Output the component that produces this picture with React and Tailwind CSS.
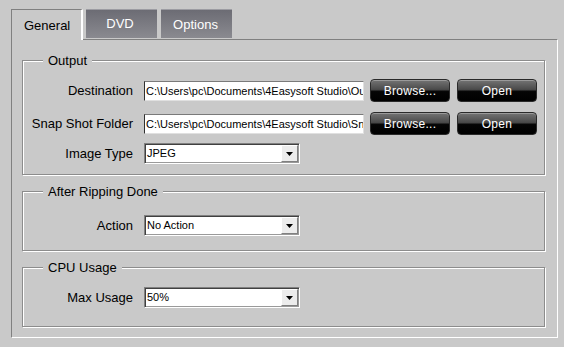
import React from 'react';

const FONT = "font-['Liberation_Sans',Arial,sans-serif]";

function Group({ title, className, children }) {
  return (
    <div className={`relative w-[523px] border border-[#8c8c8c] shadow-[inset_1px_1px_0_#fff,1px_1px_0_#fff] ${className}`}>
      <span className="absolute top-[-8px] left-[20px] px-[5px] bg-[#c9c9c9] text-[13px] leading-[15px] text-black">
        {title}
      </span>
      {children}
    </div>
  );
}

function Label({ children }) {
  return (
    <div className="w-[110px] text-right text-[13px] leading-[15px] text-black whitespace-nowrap">{children}</div>
  );
}

function PathBox({ value }) {
  return (
    <div className="ml-[11px] w-[220px] h-[20px] bg-white border border-t-[#7a7a7a] border-l-[#303030] border-r-[#e0e0e0] border-b-[#e0e0e0] overflow-hidden whitespace-nowrap text-[11px] leading-[18px] pl-[1px] text-black">
      {value}
    </div>
  );
}

function DarkButton({ children, className = '' }) {
  return (
    <button className={`w-[80px] h-[23px] rounded-[4px] border border-[#2a2a2a] bg-[linear-gradient(to_bottom,#747474_0%,#4a4a4a_45%,#050505_55%,#000_100%)] shadow-[inset_0_1px_0_#9a9a9a] text-white text-[12px] leading-[20px] tracking-[0.3px] ${className}`}>
      {children}
    </button>
  );
}

function Combo({ value }) {
  return (
    <div className="ml-[11px] w-[156px] h-[21px] flex items-center bg-white border border-t-[#808080] border-l-[#808080] border-r-white border-b-white shadow-[inset_1px_1px_0_#404040,inset_-1px_-1px_0_#9a9a9a]">
      <div className="flex-1 text-[11px] leading-[17px] pl-[2px] text-black whitespace-nowrap overflow-hidden">{value}</div>
      <div className="w-[17px] h-[17px] mr-[1px] bg-[#ececec] border border-t-white border-l-white border-r-[#808080] border-b-[#808080] flex items-center justify-center">
        <svg width="7" height="4" viewBox="0 0 7 4">
          <path d="M0 0h7L3.5 4z" fill="#000" />
        </svg>
      </div>
    </div>
  );
}

export default function App() {
  return (
    <div className={`w-[564px] h-[347px] bg-[#c9c9c9] pt-[9px] pl-[11px] ${FONT}`}>
      {/* Tabs */}
      <div className="flex items-start h-[30px]">
        <div className="relative z-10 w-[72px] h-[31px] bg-[#c9c9c9] border-l border-t border-[#808080] border-r-2 border-r-white pl-[12px] pt-[8px] text-[13px] leading-[15px] text-black">
          General
        </div>
        <div className="ml-[3px] w-[71px] h-[29px] border-t border-[#9c9ca2] bg-[linear-gradient(to_bottom,#6c6c74,#8a8a90)] text-white text-[13px] leading-[15px] text-center pt-[6px] pr-[3px]">
          DVD
        </div>
        <div className="ml-[4px] w-[71px] h-[29px] border-t border-[#9c9ca2] bg-[linear-gradient(to_bottom,#6c6c74,#8a8a90)] text-white text-[13px] leading-[15px] text-center pt-[7px] pr-[2px]">
          Options
        </div>
      </div>

      {/* Panel */}
      <div className="w-[547px] h-[299px] border-l border-t border-[#808080] border-r border-r-white border-b border-b-white pt-[20px] pl-[10px]">
        <Group title="Output" className="h-[115px] pt-[18px]">
          <div className="flex items-center h-[23px]">
            <Label>Destination</Label>
            <PathBox value="C:\Users\pc\Documents\4Easysoft Studio\Ou" />
            <DarkButton className="ml-[6px]">Browse...</DarkButton>
            <DarkButton className="ml-[7px]">Open</DarkButton>
          </div>
          <div className="flex items-center h-[23px] mt-[10px]">
            <Label>Snap Shot Folder</Label>
            <PathBox value="C:\Users\pc\Documents\4Easysoft Studio\Sn" />
            <DarkButton className="ml-[6px]">Browse...</DarkButton>
            <DarkButton className="ml-[7px]">Open</DarkButton>
          </div>
          <div className="flex items-center h-[21px] mt-[8px]">
            <Label>Image Type</Label>
            <Combo value="JPEG" />
          </div>
        </Group>

        <Group title="After Ripping Done" className="h-[60px] mt-[16px] pt-[23px]">
          <div className="flex items-center h-[21px]">
            <Label>Action</Label>
            <Combo value="No Action" />
          </div>
        </Group>

        <Group title="CPU Usage" className="h-[60px] mt-[16px] pt-[19px]">
          <div className="flex items-center h-[21px]">
            <Label>Max Usage</Label>
            <Combo value="50%" />
          </div>
        </Group>
      </div>
    </div>
  );
}
